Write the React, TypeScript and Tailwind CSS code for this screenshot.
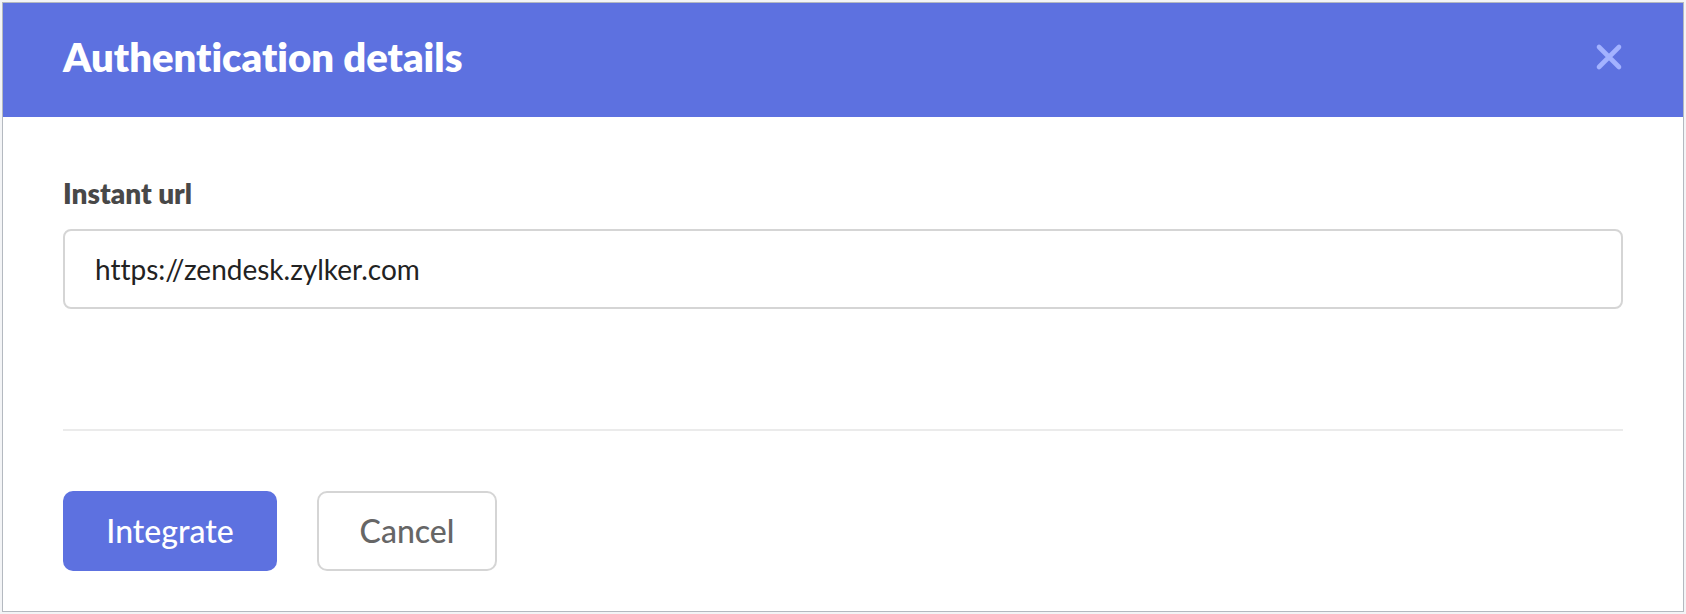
import { useState } from "react";

const App = () => {
    const [url, setUrl] = useState("https://zendesk.zylker.com");

    return (
        <div className="bg-[#f3f4f6] p-0.5 font-['Lato',sans-serif] [font-variant-ligatures:none]">
            <section className="border border-[#b4b9c0] bg-white">
                <header className="flex items-center justify-between bg-[#5d71e0] px-15 pt-[29px] pb-[35px]">
                    <h1 className="text-[40px] leading-[50px] font-extrabold text-white">Authentication details</h1>
                    <button type="button" aria-label="Close" className="cursor-pointer">
                        <svg width="28" height="28" viewBox="0 0 28 28" fill="none" stroke="#a3b2ff" strokeWidth="4.6" strokeLinecap="round">
                            <path d="M4 4l20 20M24 4L4 24" />
                        </svg>
                    </button>
                </header>

                <form className="px-15 pt-[58px] pb-10" onSubmit={(e) => e.preventDefault()}>
                    <label htmlFor="instant-url" className="block text-[28px] leading-9 font-extrabold text-[#484848]">
                        Instant url
                    </label>
                    <input
                        id="instant-url"
                        type="text"
                        value={url}
                        onChange={(e) => setUrl(e.target.value)}
                        className="mt-[18px] block h-20 w-full rounded-lg border-2 border-[#d5d5d5] px-[30px] text-[28px] text-[#222222] outline-none"
                    />

                    <div className="mt-30 flex gap-10 border-t-2 border-[#ebebeb] pt-15">
                        <button type="submit" className="h-20 min-w-[214px] cursor-pointer rounded-[10px] bg-[#5d71e0] px-10 text-[32px] font-medium text-white">
                            Integrate
                        </button>
                        <button type="button" className="h-20 min-w-[180px] cursor-pointer rounded-[10px] border-2 border-[#d5d5d5] px-10 text-[32px] font-medium text-[#666666]">
                            Cancel
                        </button>
                    </div>
                </form>
            </section>
        </div>
    );
};

export default App;
